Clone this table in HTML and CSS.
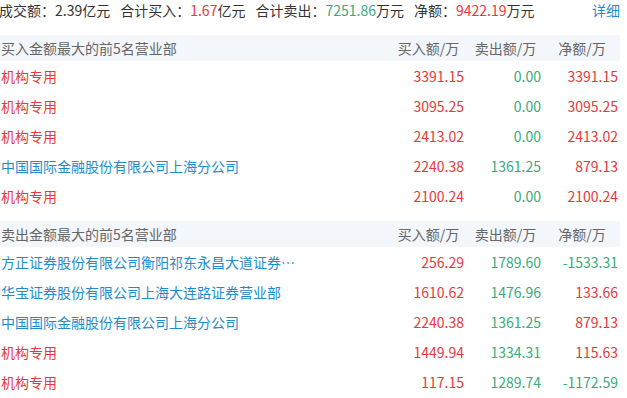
FILE: index.html
```html
<!DOCTYPE html>
<html lang="zh-CN">
<head>
<meta charset="utf-8">
<link rel="stylesheet" href="styles.css">
</head>
<body>
<div class="page">
  <div class="summary">
    <div class="stats">
      <span class="stat">成交额：<span class="dark">2.39</span>亿元</span>
      <span class="stat">合计买入：<span class="red">1.67</span>亿元</span>
      <span class="stat">合计卖出：<span class="green">7251.86</span>万元</span>
      <span class="stat">净额：<span class="red">9422.19</span>万元</span>
    </div>
    <a class="detail">详细</a>
  </div>

  <div class="table">
    <div class="row head">
      <div class="name">买入金额最大的前5名营业部</div>
      <div class="col">买入额/万</div>
      <div class="col">卖出额/万</div>
      <div class="col">净额/万</div>
    </div>
    <div class="row">
      <div class="name red">机构专用</div>
      <div class="num red">3391.15</div>
      <div class="num green">0.00</div>
      <div class="num red">3391.15</div>
    </div>
    <div class="row">
      <div class="name red">机构专用</div>
      <div class="num red">3095.25</div>
      <div class="num green">0.00</div>
      <div class="num red">3095.25</div>
    </div>
    <div class="row">
      <div class="name red">机构专用</div>
      <div class="num red">2413.02</div>
      <div class="num green">0.00</div>
      <div class="num red">2413.02</div>
    </div>
    <div class="row">
      <div class="name blue">中国国际金融股份有限公司上海分公司</div>
      <div class="num red">2240.38</div>
      <div class="num green">1361.25</div>
      <div class="num red">879.13</div>
    </div>
    <div class="row">
      <div class="name red">机构专用</div>
      <div class="num red">2100.24</div>
      <div class="num green">0.00</div>
      <div class="num red">2100.24</div>
    </div>
  </div>

  <div class="table second">
    <div class="row head">
      <div class="name">卖出金额最大的前5名营业部</div>
      <div class="col">买入额/万</div>
      <div class="col">卖出额/万</div>
      <div class="col">净额/万</div>
    </div>
    <div class="row">
      <div class="name blue">方正证券股份有限公司衡阳祁东永昌大道证券营业部</div>
      <div class="num red">256.29</div>
      <div class="num green">1789.60</div>
      <div class="num green">-1533.31</div>
    </div>
    <div class="row">
      <div class="name blue">华宝证券股份有限公司上海大连路证券营业部</div>
      <div class="num red">1610.62</div>
      <div class="num green">1476.96</div>
      <div class="num red">133.66</div>
    </div>
    <div class="row">
      <div class="name blue">中国国际金融股份有限公司上海分公司</div>
      <div class="num red">2240.38</div>
      <div class="num green">1361.25</div>
      <div class="num red">879.13</div>
    </div>
    <div class="row">
      <div class="name red">机构专用</div>
      <div class="num red">1449.94</div>
      <div class="num green">1334.31</div>
      <div class="num red">115.63</div>
    </div>
    <div class="row">
      <div class="name red">机构专用</div>
      <div class="num red">117.15</div>
      <div class="num green">1289.74</div>
      <div class="num green">-1172.59</div>
    </div>
  </div>
</div>
</body>
</html>
```

FILE: styles.css
```css
* { box-sizing: border-box; }
html, body { margin: 0; padding: 0; background: #fff; }
body {
  font-family: "Noto Sans CJK SC", "Noto Sans", sans-serif;
  font-size: 14px;
  color: #333;
}
.page { width: 620px; }
.summary {
  display: flex;
  justify-content: space-between;
  align-items: center;
  height: 20px;
  line-height: 20px;
  margin-bottom: 15px;
}
.stats { display: flex; gap: 10px; margin-left: -1px; }
.stat { white-space: nowrap; }
.detail { color: #1f8ccc; cursor: pointer; }
.red { color: #e8383d; }
.green { color: #3aaa7c; }
.blue { color: #1f8ccc; }
.dark { color: #333; }
.table { display: flex; flex-direction: column; }
.second { margin-top: 10px; }
.row {
  display: grid;
  grid-template-columns: 1fr 77px 77px 76px;
  height: 30px;
  line-height: 30px;
  align-items: center;
}
.row.head {
  height: 26px;
  line-height: 26px;
  background: #f3f6fa;
  color: #666;
}
.name {
  padding-left: 1px;
  max-width: 302px;
  overflow: hidden;
  white-space: nowrap;
  text-overflow: ellipsis;
}
.col { text-align: center; white-space: nowrap; }
.num { text-align: right; padding-right: 3px; white-space: nowrap; }
.row .num:last-child { padding-right: 2px; }
```
